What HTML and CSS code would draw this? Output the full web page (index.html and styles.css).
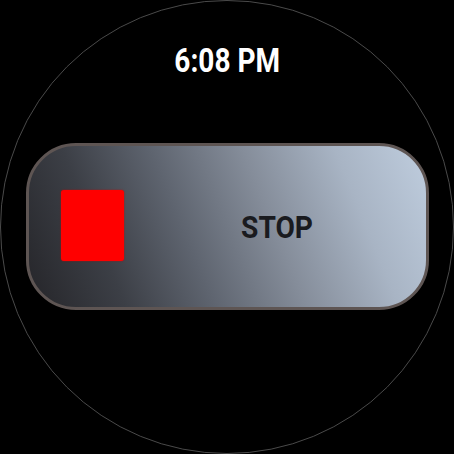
FILE: index.html
```html
<!DOCTYPE html>
<html>
<head>
<meta charset="utf-8">
<link rel="stylesheet" href="styles.css">
</head>
<body>
<div class="screen">
  <div class="time">6:08 PM</div>
  <div class="button">
    <div class="stop-icon"></div>
    <div class="label">STOP</div>
  </div>
</div>
</body>
</html>
```
FILE: styles.css
```css
html, body {
  margin: 0;
  padding: 0;
  background: #000;
  width: 454px;
  height: 454px;
  overflow: hidden;
}
.screen {
  box-sizing: border-box;
  width: 454px;
  height: 454px;
  border-radius: 50%;
  border: 1px solid #4a4a4a;
  display: flex;
  flex-direction: column;
  align-items: center;
  padding-top: 42px;
  font-family: Roboto, "Liberation Sans", sans-serif;
}
.time {
  color: #fff;
  font-weight: 700;
  font-size: 33px;
  line-height: 36px;
  transform: scaleX(0.85);
  margin-left: 1px;
}
.button {
  box-sizing: border-box;
  margin-top: 64px;
  margin-left: 1px;
  width: 403px;
  height: 167px;
  border: 3px solid #5e5553;
  border-radius: 50px;
  background: linear-gradient(68deg, #252529 0%, #3c3f46 21%, #5e646f 40%, #858d9a 60%, #a8b4c4 80%, #bfcdde 100%);
  display: flex;
  align-items: center;
  padding-left: 32px;
  padding-right: 10px;
}
.stop-icon {
  width: 63px;
  height: 71px;
  background: #ff0000;
  border-radius: 3px;
  box-shadow: 0 0 1.5px #c00;
  flex: none;
  margin-top: -2px;
}
.label {
  flex: 1;
  text-align: center;
  color: #1a1b1f;
  font-weight: 700;
  font-size: 32px;
  transform: scaleX(0.88);
  padding-left: 16px;
}
```
